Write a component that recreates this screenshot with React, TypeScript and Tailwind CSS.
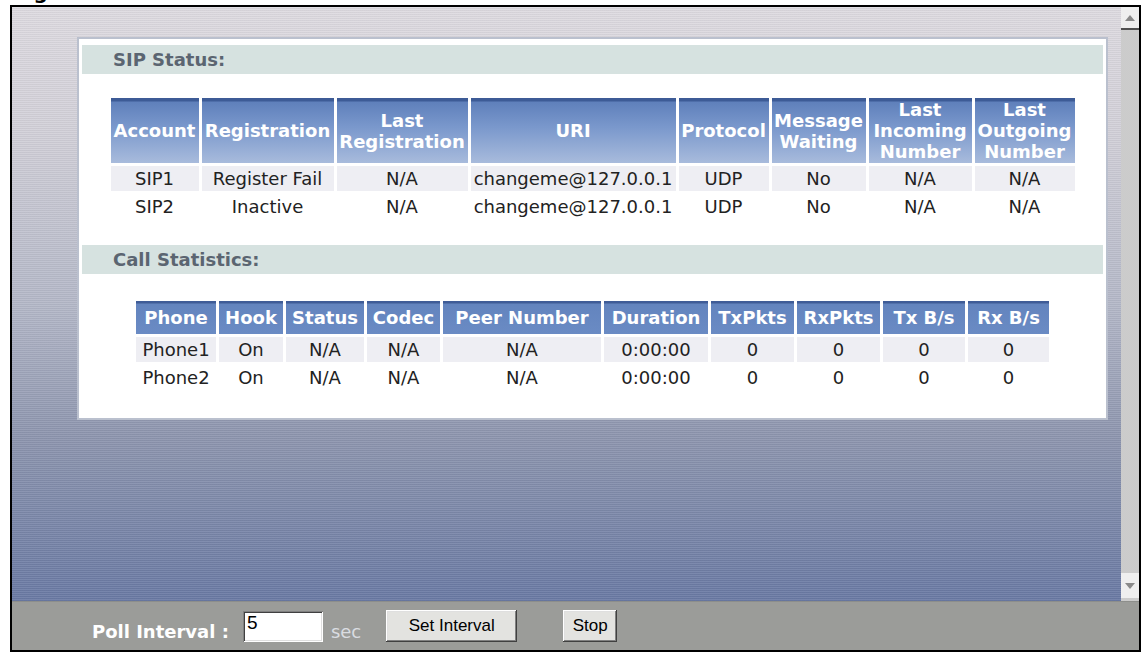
import React from 'react';

const sipCols = 'grid grid-cols-[88px_132px_131px_205px_90px_94px_103px_100px] gap-[3px]';
const callCols = 'grid grid-cols-[80px_64px_78px_73px_158px_104px_83px_83px_82px_81px] gap-[3px]';

const sipHead: React.ReactNode[] = [
  'Account',
  'Registration',
  <>Last<br />Registration</>,
  'URI',
  'Protocol',
  <>Message<br />Waiting</>,
  <>Last<br />Incoming<br />Number</>,
  <>Last<br />Outgoing<br />Number</>,
];

const sipRows = [
  ['SIP1', 'Register Fail', 'N/A', 'changeme@127.0.0.1', 'UDP', 'No', 'N/A', 'N/A'],
  ['SIP2', 'Inactive', 'N/A', 'changeme@127.0.0.1', 'UDP', 'No', 'N/A', 'N/A'],
];

const callHead = ['Phone', 'Hook', 'Status', 'Codec', 'Peer Number', 'Duration', 'TxPkts', 'RxPkts', 'Tx B/s', 'Rx B/s'];

const callRows = [
  ['Phone1', 'On', 'N/A', 'N/A', 'N/A', '0:00:00', '0', '0', '0', '0'],
  ['Phone2', 'On', 'N/A', 'N/A', 'N/A', '0:00:00', '0', '0', '0', '0'],
];

const SectionBand = ({ title }: { title: string }) => (
  <div className="h-[29px] bg-[#d6e2e0] flex items-center pl-[31px] text-[18px] font-bold text-[#5b6571]">
    {title}
  </div>
);

const DataRow = ({ cells, cols, shaded }: { cells: string[]; cols: string; shaded: boolean }) => (
  <div className={cols}>
    {cells.map((c, i) => (
      <div
        key={i}
        className={`h-[25px] flex items-center justify-center text-[18px] text-[#222222] whitespace-nowrap ${
          shaded ? 'bg-[#eeeef3]' : ''
        }`}
      >
        {c}
      </div>
    ))}
  </div>
);

const Panel = () => (
  <div className="w-[1031px] h-[383px] bg-white border-2 border-[#bac0ce] pt-[6px] px-[3px]">
    <SectionBand title="SIP Status:" />

    {/* SIP table */}
    <div className="mt-[24px] mx-auto w-fit flex flex-col gap-[3px]">
      <div className={sipCols}>
        {sipHead.map((h, i) => (
          <div
            key={i}
            className="h-[65px] flex items-center justify-center text-center text-[18px] leading-[21px] font-bold text-white whitespace-nowrap bg-[linear-gradient(180deg,#3d5b96_0px,#3d5b96_3px,#5f80bb_4px,#7a98cc_45%,#a8bbdc_100%)]"
          >
            <span>{h}</span>
          </div>
        ))}
      </div>
      {sipRows.map((r, i) => (
        <DataRow key={i} cells={r} cols={sipCols} shaded={i === 0} />
      ))}
    </div>

    <div className="mt-[26px]">
      <SectionBand title="Call Statistics:" />
    </div>

    {/* Call table */}
    <div className="mt-[27px] mx-auto w-fit flex flex-col gap-[3px]">
      <div className={callCols}>
        {callHead.map((h) => (
          <div
            key={h}
            className="h-[33px] flex items-center justify-center text-[18px] font-bold text-white whitespace-nowrap bg-[linear-gradient(180deg,#3f5c97_0px,#3f5c97_2px,#6384be_3px,#6a8bc4_100%)]"
          >
            {h}
          </div>
        ))}
      </div>
      {callRows.map((r, i) => (
        <DataRow key={i} cells={r} cols={callCols} shaded={i === 0} />
      ))}
    </div>
  </div>
);

const Scrollbar = () => (
  <div className="w-[18px] flex flex-col bg-[#f3f3f3] bg-[radial-gradient(#c9c9c9_0.7px,transparent_0.8px)] bg-[length:2px_2px]">
    <div className="h-[21px] bg-[#efefef] flex items-center justify-center">
      <svg width="10" height="6" viewBox="0 0 10 6">
        <polygon points="0,6 5,0 10,6" fill="#8a8a8a" />
      </svg>
    </div>
    <div className="h-[2px] bg-[#505050]" />
    <div className="flex-1" />
    <div className="h-[25px] mb-[3px] bg-[#efefef] flex items-center justify-center">
      <svg width="10" height="6" viewBox="0 0 10 6">
        <polygon points="0,0 10,0 5,6" fill="#8a8a8a" />
      </svg>
    </div>
  </div>
);

const BottomBar = () => (
  <div className="h-[49px] bg-[#9b9c99] border-t border-[#8d8e8b] flex items-center pl-[80px]">
    <span className="pt-[10px] text-[18px] font-bold text-white whitespace-nowrap">Poll Interval :</span>
    <div className="ml-[14px] w-[80px] h-[31px] bg-white shadow-[inset_1px_1px_#808080,inset_-1px_-1px_#ffffff,inset_2px_2px_#404040,inset_-2px_-2px_#dfdfdf] pl-[4px] pt-[1px] font-['Liberation_Sans',sans-serif] text-[19px] leading-[22px] text-black">
      5
    </div>
    <span className="ml-[8px] pt-[10px] text-[18px] text-[#dadde1]">sec</span>
    <button className="ml-[25px] w-[131px] h-[32px] bg-[#e3e3e0] shadow-[inset_-1px_-1px_#404040,inset_1px_1px_#ffffff,inset_-2px_-2px_#808080,inset_2px_2px_#dfdfdf] font-['Liberation_Sans',sans-serif] text-[17px] text-black">
      Set Interval
    </button>
    <button className="ml-[46px] w-[54px] h-[32px] bg-[#e3e3e0] shadow-[inset_-1px_-1px_#404040,inset_1px_1px_#ffffff,inset_-2px_-2px_#808080,inset_2px_2px_#dfdfdf] font-['Liberation_Sans',sans-serif] text-[17px] text-black">
      Stop
    </button>
  </div>
);

export default function App() {
  return (
    <div className="w-[1143px] h-[656px] bg-white overflow-hidden font-['DejaVu_Sans',Verdana,sans-serif]">
      {/* cut-off caption above the frame */}
      <div className="h-[5px] overflow-hidden">
        <div className="-mt-[18px] pl-[13px] text-[20px] leading-[20px] font-bold text-black">Figure</div>
      </div>

      <div className="ml-[10px] w-[1131px] h-[647px] border-2 border-black flex flex-col">
        <div className="flex h-[594px]">
          <div className="flex-1 pl-[65px] pt-[30px] bg-[repeating-linear-gradient(180deg,rgba(255,255,255,0.08)_0px,rgba(255,255,255,0.08)_1px,rgba(0,0,0,0.04)_1px,rgba(0,0,0,0.04)_2px),linear-gradient(180deg,#dedbe1_0%,#d3d1d9_20%,#b4b8c8_50%,#8e96af_72%,#6a7aa4_100%)]">
            <Panel />
          </div>
          <Scrollbar />
        </div>
        <BottomBar />
      </div>
    </div>
  );
}
